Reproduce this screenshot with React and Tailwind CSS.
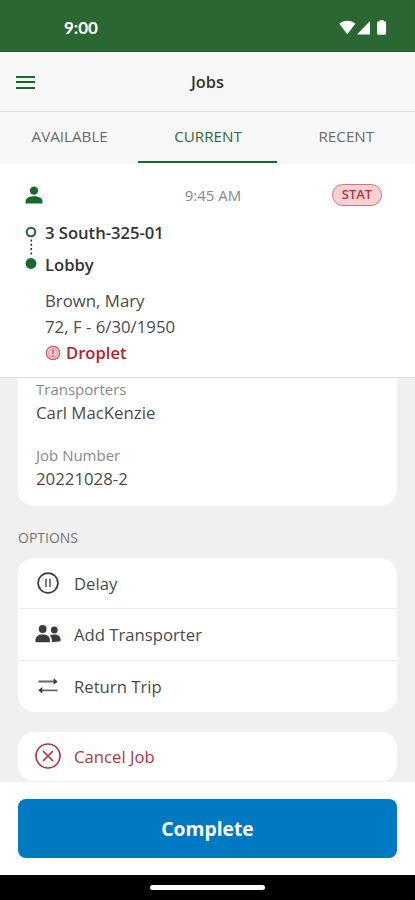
// src/App.jsx
import React from 'react';

const PersonIcon = () => (
  <svg width="18" height="18" viewBox="0 0 18 18" fill="currentColor">
    <circle cx="9" cy="4.600" r="4.200" />
    <path d="M0.500 17.500v-1.600C0.500 12.500 3.500 10.300 9 10.300s8.500 2.200 8.500 5.600v1.600z" />
  </svg>
);

const PeopleIcon = () => (
  <svg width="26" height="18" viewBox="0 0 26 18" fill="currentColor">
    <circle cx="7.700" cy="4" r="3.900" />
    <path d="M0.500 17.200v-2.200c0-3.300 2.700-5.500 7.200-5.500s7.200 2.200 7.200 5.500v2.200z" />
    <circle cx="19.300" cy="5" r="3.400" />
    <path d="M17 17.200l-.3-3c-.3-1.600-1-2.800-2-3.700 1.300-.6 2.900-.9 4.500-.9 4.100 0 6.400 1.900 6.400 5v1.600z" />
  </svg>
);

const PauseIcon = () => (
  <svg width="22" height="22" viewBox="0 0 22 22" fill="none" stroke="currentColor">
    <circle cx="11" cy="11" r="9.900" strokeWidth="1.700" />
    <path d="M9 7v8M13 7v8" stroke="#777" strokeWidth="1.900" />
  </svg>
);

const SwapIcon = () => (
  <svg width="22" height="18" viewBox="0 0 22 18">
    <path d="M1.500 4.500h17M3.500 13.300h17" fill="none" stroke="#666" strokeWidth="1.800" />
    <path d="M16.700 1.200L20.700 4.500l-4 3.300zM5.300 10L1.300 13.300l4 3.300z" fill="currentColor" />
  </svg>
);

const CancelIcon = () => (
  <svg width="26" height="26" viewBox="0 0 26 26" fill="none" stroke="currentColor" strokeWidth="1.700">
    <circle cx="13" cy="13" r="12" />
    <path d="M8 8l10 10M18 8L8 18" />
  </svg>
);

const DropletIcon = () => (
  <svg width="16" height="16" viewBox="0 0 16 16">
    <circle cx="8" cy="8" r="6.700" fill="#f8c9cd" stroke="#cf5b66" strokeWidth="1.200" />
    <circle cx="8" cy="8" r="4.300" fill="none" stroke="#e58f98" strokeWidth="0.900" />
    <path d="M8 4.500v4.500M8 10.300v1.400" stroke="#c84551" strokeWidth="1.300" />
  </svg>
);

// Pickup -> destination marker
const RouteIcon = () => (
  <svg width="12" height="44" viewBox="0 0 12 44">
    <circle cx="6" cy="6" r="4.300" fill="white" stroke="#15692a" strokeWidth="2" />
    <path d="M6.300 13.500v16.500" stroke="#333" strokeWidth="1.600" strokeDasharray="2 2.300" />
    <circle cx="6" cy="37.500" r="5.400" fill="#15692a" />
  </svg>
);

const StatusIcons = () => (
  <svg width="48" height="16" viewBox="0 0 48 16" fill="white">
    <path d="M0.300 3.800C4.500-.2 12.300-.2 16.300 3.800L8.300 14.300z" />
    <path d="M31 1v13.500H18z" />
    <path d="M40.500 1.500V.3h4.200v1.200h1.200c.7 0 1.200.5 1.200 1.200v10.800c0 .7-.5 1.200-1.200 1.200h-6.600c-.7 0-1.200-.5-1.200-1.200V2.700c0-.7.5-1.200 1.200-1.200z" />
  </svg>
);

const tabs = ['AVAILABLE', 'CURRENT', 'RECENT'];

const options = [
  { label: 'Delay', icon: PauseIcon },
  { label: 'Add Transporter', icon: PeopleIcon },
  { label: 'Return Trip', icon: SwapIcon },
];

function App() {
  const [activeTab, setActiveTab] = React.useState('CURRENT');

  return (
    <div className="w-full h-[900px] flex flex-col overflow-hidden bg-[#f0f0f0] text-[#4a4a4a] font-['Open_Sans',sans-serif]">
      {/* Status bar */}
      <div className="h-[52px] shrink-0 bg-[#2b6732] border-b border-[#1f5a27] flex items-center justify-between pl-16 pr-7 pt-1">
        <span className="font-['Lato',sans-serif] font-bold text-[17px] text-white">9:00</span>
        <StatusIcons />
      </div>

      {/* Title bar */}
      <header className="h-[60px] shrink-0 bg-[#f7f7f7] border-b border-[#dfdfdf] grid grid-cols-3 items-center px-4 pt-px">
        <button className="w-[19px] flex flex-col justify-between h-[13px]" aria-label="Menu">
          <span className="w-full h-0.5 bg-[#15692a]"></span>
          <span className="w-full h-0.5 bg-[#15692a]"></span>
          <span className="w-full h-0.5 bg-[#15692a]"></span>
        </button>
        <h1 className="text-center text-[16.400px] font-semibold text-[#333]">Jobs</h1>
      </header>

      {/* Tabs */}
      <nav className="h-[52px] shrink-0 bg-[#f7f7f7] grid grid-cols-3">
        {tabs.map((tab) => (
          <button
            key={tab}
            onClick={() => setActiveTab(tab)}
            className={
              tab === activeTab
                ? 'text-[15.200px] font-medium text-[#2b6b38] border-b-2 border-[#15692a] mb-px pl-px'
                : 'text-[15.200px] font-medium text-[#6b6b6b] border-b-2 border-transparent mb-px pl-px'
            }
          >
            {tab}
          </button>
        ))}
      </nav>

      {/* Job summary */}
      <section className="h-[214px] shrink-0 bg-white border-b border-[#dcdcdc] px-[25px] pt-[19px]">
        <div className="grid grid-cols-3 items-center h-6">
          <span className="text-[#15692a]"><PersonIcon /></span>
          <span className="text-center pl-[11px] text-[15px] text-[#888]">9:45 AM</span>
          <span className="justify-self-end mr-2 w-[50px] h-[22px] rounded-full border border-[#d9727b] bg-[#fbd0d3] text-[#b8323d] text-[13px] font-semibold flex items-center justify-center">
            STAT
          </span>
        </div>
        <div className="flex gap-2 mt-[10px]">
          <div className="pt-[9px]"><RouteIcon /></div>
          <div className="text-[16.600px] font-semibold leading-8 text-[#333]">
            <p>3 South-325-01</p>
            <p>Lobby</p>
          </div>
        </div>
        <div className="pl-5 mt-[7px] text-[16.800px] leading-[26px]">
          <p>Brown, Mary</p>
          <p>72, F - 6/30/1950</p>
          <p className="flex items-center gap-[5px] text-[16.600px] font-semibold text-[#b8202c]">
            <DropletIcon />
            Droplet
          </p>
        </div>
      </section>

      {/* Scrolled details */}
      <main className="flex-1 min-h-0 overflow-hidden px-[18px]">
        <div className="h-32 bg-white rounded-b-2xl px-[18px]">
          <p className="text-[15px] leading-[22px] text-[#888]">Transporters</p>
          <p className="text-[16.800px] leading-[26px]">Carl MacKenzie</p>
          <p className="text-[15px] leading-[22px] text-[#888] mt-[18px]">Job Number</p>
          <p className="text-[16.800px] leading-[26px]">20221028-2</p>
        </div>

        <h2 className="mt-[22px] mb-[10px] text-sm leading-5 text-[#777]">OPTIONS</h2>

        <div className="bg-white rounded-2xl divide-y divide-[#ebebeb]">
          {options.map(({ label, icon: Icon }) => (
            <button key={label} className="w-full h-[51.300px] flex items-center pl-[17px] gap-[13px]">
              <span className="w-[26px] flex justify-center text-[#3c3c3c]"><Icon /></span>
              <span className="text-[16.700px]">{label}</span>
            </button>
          ))}
        </div>

        <button className="mt-5 w-full h-[49px] bg-white rounded-2xl flex items-center pl-[17px] gap-[13px] text-[#b8323d]">
          <CancelIcon />
          <span className="text-[16.700px]">Cancel Job</span>
        </button>
      </main>

      {/* Bottom action */}
      <footer className="h-[93px] shrink-0 bg-white px-[18px] pt-[17px]">
        <button className="w-full h-[59px] rounded-lg bg-[#0079c3] text-white text-[19.300px] font-bold pt-0.5">
          Complete
        </button>
      </footer>
      <div className="h-[25px] shrink-0 bg-black flex items-center justify-center">
        <div className="w-[115px] h-[5px] rounded-full bg-white"></div>
      </div>
    </div>
  );
}

export default App;
